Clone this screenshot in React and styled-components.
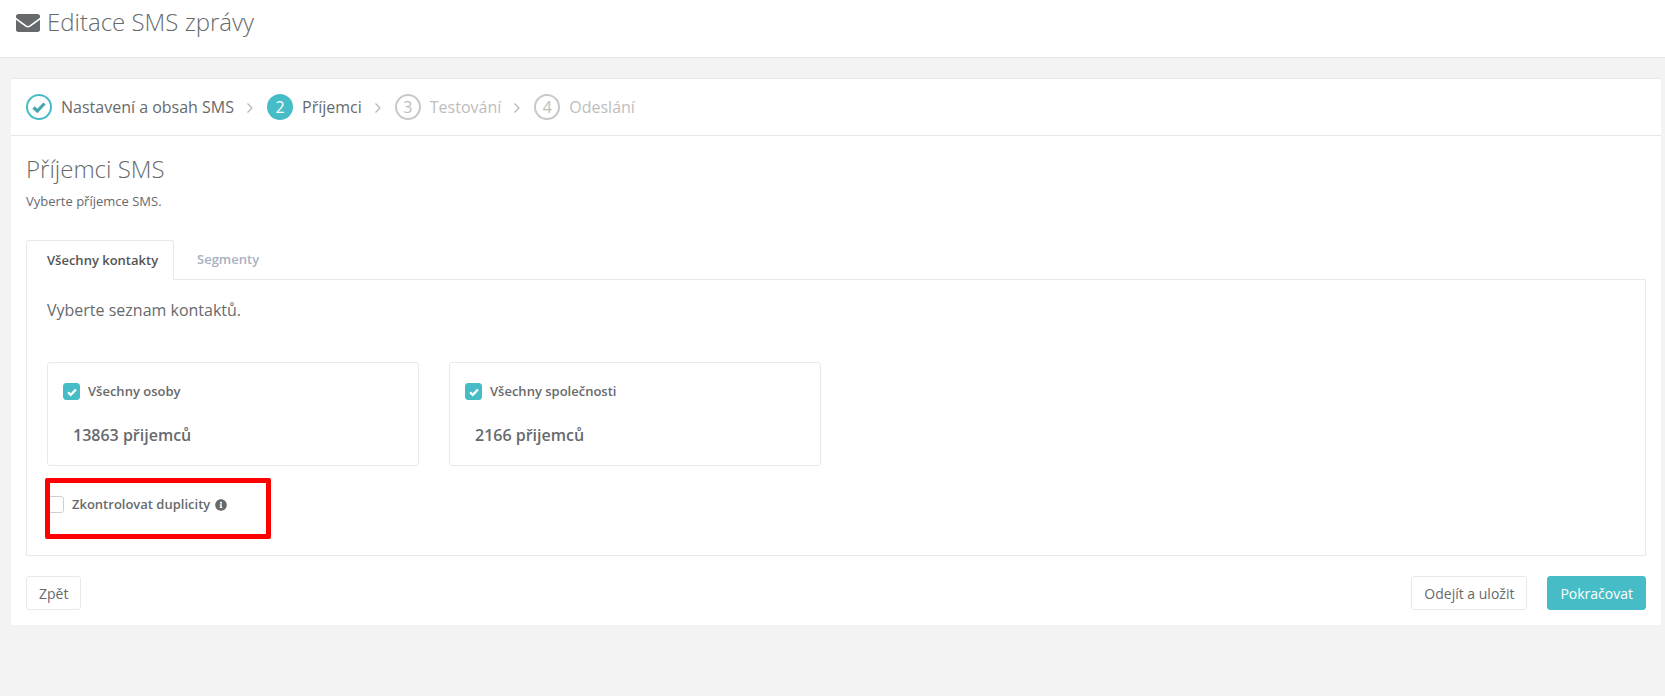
import React from "react";
import styled, { createGlobalStyle } from "styled-components";
import { FaEnvelope, FaInfoCircle } from "react-icons/fa";

const Global = createGlobalStyle`
  html, body { margin: 0; padding: 0; background: #f3f3f4; }
  body { font-family: "Open Sans", "Noto Sans", sans-serif; color: #676a6c; font-size: 13px; }
  * { box-sizing: border-box; }
`;

const Page = styled.div`
  width: 1665px;
  height: 696px;
  overflow: hidden;
`;
const Header = styled.header`
  height: 58px;
  background: #fff;
  border-bottom: 1px solid #e7e7e7;
  display: flex;
  align-items: flex-start;
  padding: 7px 0 0 16px;
  gap: 7px;
`;
const HeaderIcon = styled(FaEnvelope)`
  width: 24px;
  height: 24px;
  color: #676a6c;
  margin-top: 4px;
`;
const Title = styled.h1`
  margin: 0;
  font-size: 24px;
  line-height: 30px;
  font-weight: 300;
  color: #676a6c;
`;
const Panel = styled.main`
  margin: 20px 4px 0 11px;
  height: 547px;
  background: #fff;
  border-top: 1px solid #e7eaec;
`;
const Steps = styled.nav`
  height: 57px;
  border-bottom: 1px solid #e7e7e7;
  display: flex;
  align-items: center;
  padding: 0 0 0 15px;
`;
const Step = styled.div`
  display: flex;
  align-items: center;
  gap: 9px;
  font-size: 16px;
  color: ${(p) => (p.$off ? "#bdbdbd" : "#676a6c")};
`;
const Circle = styled.span`
  width: 26px;
  height: 26px;
  border-radius: 50%;
  display: flex;
  align-items: center;
  justify-content: center;
  font-size: 16px;
  border: ${(p) => (p.$off ? "2px solid #c8c8c8" : "2.5px solid #46bdc6")};
  background: ${(p) => (p.$fill ? "#46bdc6" : "#fff")};
  color: ${(p) => (p.$fill ? "#fff" : p.$off ? "#bdbdbd" : "#46bdc6")};
`;
const Chevron = styled.svg`
  width: 8px;
  height: 12px;
  margin: 1px 13px 0 12px;
  fill: none;
  stroke: #b5b5b5;
  stroke-width: 1.2;
`;
const Body = styled.section`
  padding: 0 15px;
`;
const Heading = styled.h2`
  margin: 18px 0 0;
  font-size: 24px;
  line-height: 30px;
  font-weight: 300;
  color: #676a6c;
`;
const Sub = styled.p`
  margin: 8px 0 0;
  font-size: 13px;
  line-height: 18px;
  color: #676a6c;
`;
const Tabs = styled.div`
  display: flex;
  margin-top: 30px;
  height: 40px;
  position: relative;
  z-index: 1;
`;
const Tab = styled.div`
  height: 40px;
  padding: ${(p) => (p.$active ? "0 0 0 20px" : "0")};
  font-size: 13px;
  font-weight: 600;
  line-height: 39px;
  color: ${(p) => (p.$active ? "#555" : "#a7b1c2")};
  background: ${(p) => (p.$active ? "#fff" : "transparent")};
  border: ${(p) => (p.$active ? "1px solid #e7eaec" : "0")};
  border-bottom: 0;
  border-radius: 3px 3px 0 0;
  width: ${(p) => (p.$active ? "148px" : "auto")};
  margin-left: ${(p) => (p.$active ? "0" : "23px")};
`;
const TabPane = styled.div`
  height: 277px;
  margin-top: -1px;
  border: 1px solid #e7eaec;
  padding: 20px 20px 0;
`;
const Lead = styled.p`
  margin: 0;
  font-size: 16px;
  line-height: 21px;
  color: #676a6c;
`;
const Cards = styled.div`
  display: flex;
  gap: 30px;
  margin-top: 41px;
`;
const Card = styled.div`
  width: 372px;
  height: 104px;
  border: 1px solid #e7eaec;
  border-radius: 3px;
  padding: 20px 15px 0;
`;
const CheckRow = styled.label`
  display: flex;
  align-items: center;
  gap: 8px;
  font-size: 13px;
  font-weight: 600;
  color: #676a6c;
  line-height: 17px;
`;
const Box = styled.span`
  width: 17px;
  height: 17px;
  border-radius: 3px;
  display: flex;
  align-items: center;
  justify-content: center;
  background: ${(p) => (p.$on ? "#46bdc6" : "#fff")};
  border: 1px solid ${(p) => (p.$on ? "#46bdc6" : "#cfcfcf")};
`;
const Count = styled.div`
  margin: 24px 0 0 10px;
  font-size: 16px;
  font-weight: 600;
  line-height: 22px;
  color: #676a6c;
`;
const DupWrap = styled.div`
  position: relative;
  margin-top: 30px;
`;
const RedBox = styled.div`
  position: absolute;
  left: -2px;
  top: -18px;
  width: 226px;
  height: 61px;
  border: 5px solid #ff0000;
  border-radius: 2px;
`;
const Info = styled(FaInfoCircle)`
  width: 12px;
  height: 12px;
  margin-left: -3px;
  color: #676a6c;
`;
const Footer = styled.div`
  display: flex;
  align-items: center;
  margin-top: 20px;
`;
const Button = styled.button`
  height: 34px;
  padding: 0 12px;
  font-family: inherit;
  font-size: 14px;
  border-radius: 3px;
  border: 1px solid ${(p) => (p.$primary ? "#46bdc6" : "#e7eaec")};
  background: ${(p) => (p.$primary ? "#46bdc6" : "#fff")};
  color: ${(p) => (p.$primary ? "#fff" : "#676a6c")};
`;
const Spacer = styled.div`
  flex: 1;
`;
const FooterRight = styled.div`
  display: flex;
  gap: 20px;
`;
const CheckMark = styled.svg`
  width: ${(p) => p.$size}px;
  height: ${(p) => p.$size}px;
  fill: none;
  stroke: ${(p) => p.$color};
  stroke-width: 3.2;
`;

const Arrow = () => (
  <Chevron viewBox="0 0 8 12">
    <path d="M1.5 1.5 L6 6 L1.5 10.5" />
  </Chevron>
);

const Tick = ({ size, color }) => (
  <CheckMark viewBox="0 0 14 14" $size={size} $color={color}>
    <path d="M1.5 7.5 L5.3 11 L12.5 3.5" />
  </CheckMark>
);

export default function App() {
  return (
    <Page>
      <Global />
      <Header>
        <HeaderIcon />
        <Title>Editace SMS zprávy</Title>
      </Header>
      <Panel>
        <Steps>
          <Step>
            <Circle>
              <Tick size={14} color="#46a5ae" />
            </Circle>
            Nastavení a obsah SMS
          </Step>
          <Arrow />
          <Step>
            <Circle $fill>2</Circle>
            Příjemci
          </Step>
          <Arrow />
          <Step $off>
            <Circle $off>3</Circle>
            Testování
          </Step>
          <Arrow />
          <Step $off>
            <Circle $off>4</Circle>
            Odeslání
          </Step>
        </Steps>
        <Body>
          <Heading>Příjemci SMS</Heading>
          <Sub>Vyberte příjemce SMS.</Sub>
          <Tabs>
            <Tab $active>Všechny kontakty</Tab>
            <Tab>Segmenty</Tab>
          </Tabs>
          <TabPane>
            <Lead>Vyberte seznam kontaktů.</Lead>
            <Cards>
              <Card>
                <CheckRow>
                  <Box $on>
                    <Tick size={10} color="#fff" />
                  </Box>
                  Všechny osoby
                </CheckRow>
                <Count>13863 přijemců</Count>
              </Card>
              <Card>
                <CheckRow>
                  <Box $on>
                    <Tick size={10} color="#fff" />
                  </Box>
                  Všechny společnosti
                </CheckRow>
                <Count>2166 přijemců</Count>
              </Card>
            </Cards>
            <DupWrap>
              <CheckRow>
                <Box />
                Zkontrolovat duplicity
                <Info />
              </CheckRow>
              <RedBox />
            </DupWrap>
          </TabPane>
          <Footer>
            <Button>Zpět</Button>
            <Spacer />
            <FooterRight>
              <Button>Odejít a uložit</Button>
              <Button $primary>Pokračovat</Button>
            </FooterRight>
          </Footer>
        </Body>
      </Panel>
    </Page>
  );
}
